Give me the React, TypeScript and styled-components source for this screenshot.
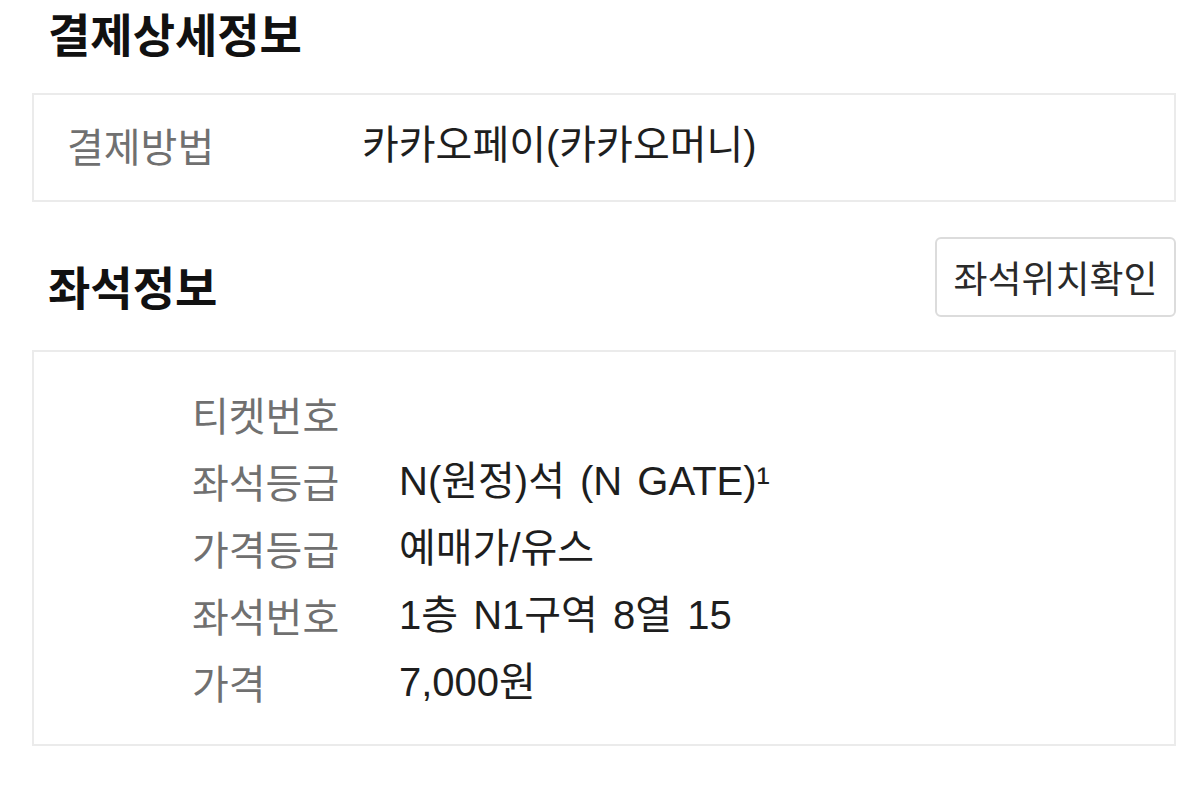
import React from "react";
import styled, { createGlobalStyle } from "styled-components";

const GlobalStyle = createGlobalStyle`
  html, body {
    margin: 0;
    padding: 0;
    background: #ffffff;
  }
  body {
    font-family: "Noto Sans CJK KR", "Noto Sans", "Liberation Sans", sans-serif;
    color: #1e1e1e;
  }
  * { box-sizing: border-box; }
`;

const Page = styled.div`
  width: 1200px;
  padding: 0 24px 0 32px;
  display: flex;
  flex-direction: column;
`;

const SectionTitle = styled.h2`
  margin: 0;
  padding-left: 16px;
  font-size: 46px;
  font-weight: 700;
  line-height: 64px;
  color: #111111;
`;

const Card = styled.div<{ $mt: number; $h: number; $pl: number; $pb?: number }>`
  margin-top: ${(p) => p.$mt}px;
  height: ${(p) => p.$h}px;
  border: 2px solid #ebebeb;
  padding-left: ${(p) => p.$pl}px;
  padding-bottom: ${(p) => p.$pb ?? 0}px;
  display: flex;
  flex-direction: column;
  justify-content: center;
`;

const InfoRow = styled.div<{ $labelW: number; $lh: number }>`
  display: grid;
  grid-template-columns: ${(p) => p.$labelW}px 1fr;
  line-height: ${(p) => p.$lh}px;
  font-size: 40px;
`;

const Label = styled.span`
  color: #707070;
`;

const Value = styled.span`
  color: #1e1e1e;
  font-family: "Liberation Sans", "Noto Sans CJK KR", sans-serif;
  word-spacing: 4px;
`;

const HeaderRow = styled.div`
  margin-top: 35px;
  display: flex;
  justify-content: space-between;
  align-items: flex-end;
`;

const SeatTitle = styled(SectionTitle)`
  line-height: 60px;
  margin-bottom: 2px;
`;

const Button = styled.button`
  width: 241px;
  height: 80px;
  border: 2px solid #dcdcdc;
  border-radius: 6px;
  background: #ffffff;
  font-family: inherit;
  font-size: 37px;
  color: #2a2a2a;
  padding: 0;
  cursor: pointer;
`;

const seatRows: [string, string][] = [
  ["티켓번호", ""],
  ["좌석등급", "N(원정)석 (N GATE)¹"],
  ["가격등급", "예매가/유스"],
  ["좌석번호", "1층 N1구역 8열 15"],
  ["가격", "7,000원"],
];

export default function App() {
  return (
    <>
      <GlobalStyle />
      <Page>
        <SectionTitle>결제상세정보</SectionTitle>
        <Card $mt={29} $h={109} $pl={33} $pb={6}>
          <InfoRow $labelW={295} $lh={50}>
            <Label>결제방법</Label>
            <Value>카카오페이(카카오머니)</Value>
          </InfoRow>
        </Card>
        <HeaderRow>
          <SeatTitle>좌석정보</SeatTitle>
          <Button>좌석위치확인</Button>
        </HeaderRow>
        <Card $mt={33} $h={396} $pl={158}>
          {seatRows.map(([l, v]) => (
            <InfoRow key={l} $labelW={207} $lh={67}>
              <Label>{l}</Label>
              <Value>{v}</Value>
            </InfoRow>
          ))}
        </Card>
      </Page>
    </>
  );
}
